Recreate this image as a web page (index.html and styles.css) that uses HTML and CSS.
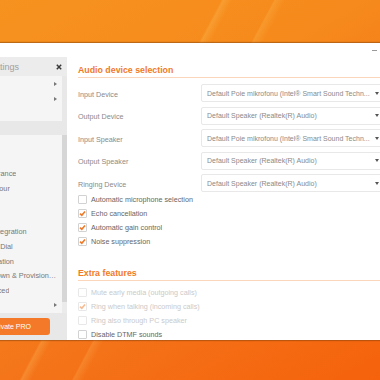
FILE: index.html
```html
<!DOCTYPE html>
<html lang="en">
<head>
  <meta charset="UTF-8">
  <title>Settings – Audio</title>
  <link rel="stylesheet" href="styles.css">
</head>
<body>

  <div class="desktop">
    <div class="window">

      <!-- Title bar -->
      <div class="titlebar">
        <span class="minimize" aria-label="Minimize"></span>
      </div>

      <div class="content">

        <!-- Sidebar -->
        <aside class="sidebar">
          <div class="side-title">
            <span>Settings</span>
            <svg class="close" width="6" height="6" viewBox="0 0 6 6" aria-label="Close">
              <path d="M0.8 0.8 L5.2 5.2 M5.2 0.8 L0.8 5.2" stroke="#3a3a3a" stroke-width="1.5"/>
            </svg>
          </div>

          <ul class="side-group">
            <li><span>Calls</span><svg class="arrow" width="3" height="4" viewBox="0 0 3 4"><path d="M0 0 L3 2 L0 4 Z" fill="#777"/></svg></li>
            <li><span>Chat</span><svg class="arrow" width="3" height="4" viewBox="0 0 3 4"><path d="M0 0 L3 2 L0 4 Z" fill="#777"/></svg></li>
            <li><span>Proxy</span></li>
          </ul>

          <div class="side-band"></div>

          <div class="side-list-wrap">
            <ul class="side-list">
              <li><span>Audio</span></li>
              <li><span>Video</span></li>
              <li><span>Appearance</span></li>
              <li><span>Behaviour</span></li>
              <li><span>Alerts</span></li>
              <li><span>Paths</span></li>
              <li><span>App Integration</span></li>
              <li><span>Speed Dial</span></li>
              <li><span>Automation</span></li>
              <li><span>Lockdown &amp; Provisioning</span></li>
              <li><span>Advanced</span></li>
              <li class="small"><span>Support</span><svg class="arrow" width="3" height="4" viewBox="0 0 3 4"><path d="M0 0 L3 2 L0 4 Z" fill="#777"/></svg></li>
            </ul>
            <div class="scrollbar"><div class="thumb"></div></div>
          </div>

          <button class="pro">Activate PRO</button>
        </aside>

        <!-- Main panel -->
        <main class="main">
          <h2 class="section-title">Audio device selection</h2>

          <div class="devices">
            <label>Input Device</label>
            <div class="select"><span>Default Poie mikrofonu (Intel® Smart Sound Techn...</span><svg width="4" height="3" viewBox="0 0 4 3"><path d="M0 0 L4 0 L2 3 Z" fill="#555"/></svg></div>

            <label>Output Device</label>
            <div class="select"><span>Default Speaker (Realtek(R) Audio)</span><svg width="4" height="3" viewBox="0 0 4 3"><path d="M0 0 L4 0 L2 3 Z" fill="#555"/></svg></div>

            <label>Input Speaker</label>
            <div class="select"><span>Default Poie mikrofonu (Intel® Smart Sound Techn...</span><svg width="4" height="3" viewBox="0 0 4 3"><path d="M0 0 L4 0 L2 3 Z" fill="#555"/></svg></div>

            <label>Output Speaker</label>
            <div class="select"><span>Default Speaker (Realtek(R) Audio)</span><svg width="4" height="3" viewBox="0 0 4 3"><path d="M0 0 L4 0 L2 3 Z" fill="#555"/></svg></div>

            <label>Ringing Device</label>
            <div class="select"><span>Default Speaker (Realtek(R) Audio)</span><svg width="4" height="3" viewBox="0 0 4 3"><path d="M0 0 L4 0 L2 3 Z" fill="#555"/></svg></div>
          </div>

          <div class="checks">
            <div class="check"><span class="box"></span>Automatic microphone selection</div>
            <div class="check"><span class="box"><svg width="7" height="7" viewBox="0 0 7 7"><path d="M1 3.6 L2.8 5.3 L6 1.5" fill="none" stroke="#f07a2a" stroke-width="1.6"/></svg></span>Echo cancellation</div>
            <div class="check"><span class="box"><svg width="7" height="7" viewBox="0 0 7 7"><path d="M1 3.6 L2.8 5.3 L6 1.5" fill="none" stroke="#f07a2a" stroke-width="1.6"/></svg></span>Automatic gain control</div>
            <div class="check"><span class="box"><svg width="7" height="7" viewBox="0 0 7 7"><path d="M1 3.6 L2.8 5.3 L6 1.5" fill="none" stroke="#f07a2a" stroke-width="1.6"/></svg></span>Noise suppression</div>
          </div>

          <h2 class="section-title extra">Extra features</h2>

          <div class="checks extra-list">
            <div class="check disabled"><span class="box"></span>Mute early media (outgoing calls)</div>
            <div class="check disabled"><span class="box"><svg width="7" height="7" viewBox="0 0 7 7"><path d="M1 3.6 L2.8 5.3 L6 1.5" fill="none" stroke="#f7bb92" stroke-width="1.6"/></svg></span>Ring when talking (incoming calls)</div>
            <div class="check disabled"><span class="box"></span>Ring also through PC speaker</div>
            <div class="check"><span class="box"></span>Disable DTMF sounds</div>
          </div>
        </main>

      </div>
    </div>
  </div>

</body>
</html>
```

FILE: styles.css
```css
:root {
  --orange: #f07a2a;
  --text: #666;
  --label: #8a8a8a;
  --muted: #cacaca;
  --panel: #f5f5f5;
  --side-bg: #e8e8e8;
}

* { box-sizing: border-box; }

html, body {
  margin: 0;
  width: 380px;
  height: 380px;
  overflow: hidden;
}
body {
  font-family: "Liberation Sans", Arial, sans-serif;
  color: var(--text);
  background:
    linear-gradient(118deg, transparent 0 38%, rgba(255, 214, 120, .22) 38.4%, transparent 40%),
    linear-gradient(118deg, transparent 0 47%, rgba(255, 214, 120, .18) 47.3%, transparent 49%),
    linear-gradient(150deg, #f6921f 0%, #f68a1c 35%, #f4741a 65%, #f5620b 100%);
}

.desktop {
  padding-top: 43px;
}

/* window */
.window {
  margin-left: -30px;
  width: 420px;
  height: 297px;
  background: #fff;
  display: flex;
  flex-direction: column;
  box-shadow: 0 0 1px 1px rgba(120, 60, 10, .45);
}
.titlebar {
  height: 14px;
  flex: none;
  display: flex;
  justify-content: flex-end;
  align-items: center;
  padding-right: 13px;
}
.minimize {
  width: 5px;
  height: 1px;
  background: #9a9a9a;
}
.content {
  flex: 1;
  display: flex;
  min-height: 0;
}

/* sidebar */
.sidebar {
  width: 97px;
  flex: none;
  background: var(--side-bg);
  display: flex;
  flex-direction: column;
}
.side-title {
  height: 19px;
  display: flex;
  align-items: center;
  justify-content: space-between;
  padding: 0 5px 0 16.5px;
  background: #ececec;
  font-size: 9px;
  color: #a0a0a0;
}
.close { display: block; }

.side-group,
.side-list {
  list-style: none;
  margin: 0;
  padding: 0;
  background: var(--panel);
  font-size: 7.3px;
  color: #777;
}
.side-group {
  margin-right: 5px;
  height: 45px;
}
.side-group li,
.side-list li {
  display: flex;
  align-items: center;
  justify-content: space-between;
  gap: 2px;
  padding: 0 5px 0 7px;
  white-space: nowrap;
}
.side-list li { padding-right: 4.5px; }
.side-group li { height: 15px; }
.side-list li { height: 14.6px; }
.side-group li span,
.side-list li span {
  overflow: hidden;
  text-overflow: ellipsis;
}
.side-list li.small { font-size: 6px; padding-right: 5px; }
.arrow { flex: none; display: block; }

.side-band {
  height: 14px;
}
.side-list-wrap {
  height: 178px;
  display: flex;
}
.side-list {
  flex: 1;
  min-width: 0;
  padding-top: 2px;
}
.scrollbar {
  width: 5px;
  background: #ebebeb;
}
.thumb {
  height: 167px;
  background: #d6d6d6;
}

.pro {
  margin-top: 5px;
  width: 80px;
  height: 17px;
  padding: 0;
  border: 0;
  border-radius: 3px;
  background: #f47a2a;
  color: #fff;
  font-family: inherit;
  font-size: 7px;
}

/* main panel */
.main {
  flex: 1;
  min-width: 0;
  padding: 7px 7px 0 11px;
  overflow: hidden;
}
.section-title {
  margin: 0;
  font-size: 8.8px;
  font-weight: 600;
  line-height: 13px;
  color: var(--orange);
  border-bottom: 1px solid #fcd6ba;
}
.section-title.extra {
  margin-top: 19px;
}

.devices {
  display: grid;
  grid-template-columns: 123px 1fr;
  row-gap: 4.5px;
  align-items: center;
  margin-top: 6px;
}
.devices label {
  font-size: 7.2px;
  color: var(--label);
  padding-top: 2px;
}
.select {
  height: 18px;
  display: flex;
  align-items: center;
  justify-content: space-between;
  padding: 0 3px 0 5px;
  border: 1px solid #e8e8e8;
  border-radius: 2px;
  font-size: 7px;
  color: #8a8a8a;
  white-space: nowrap;
}
.select svg { display: block; flex: none; }

.check {
  height: 14px;
  display: flex;
  align-items: center;
  gap: 4px;
  font-size: 7.2px;
  color: var(--text);
  white-space: nowrap;
}
.box {
  width: 9px;
  height: 9px;
  flex: none;
  display: flex;
  align-items: center;
  justify-content: center;
  border: 1px solid #d2d2d2;
  border-radius: 1px;
  background: #fff;
}
.box svg { display: block; }

.extra-list {
  margin-top: 5px;
}
.extra-list .check { height: 13.8px; }
.check.disabled { color: var(--muted); }
.check.disabled .box { border-color: #e8e8e8; }
```
